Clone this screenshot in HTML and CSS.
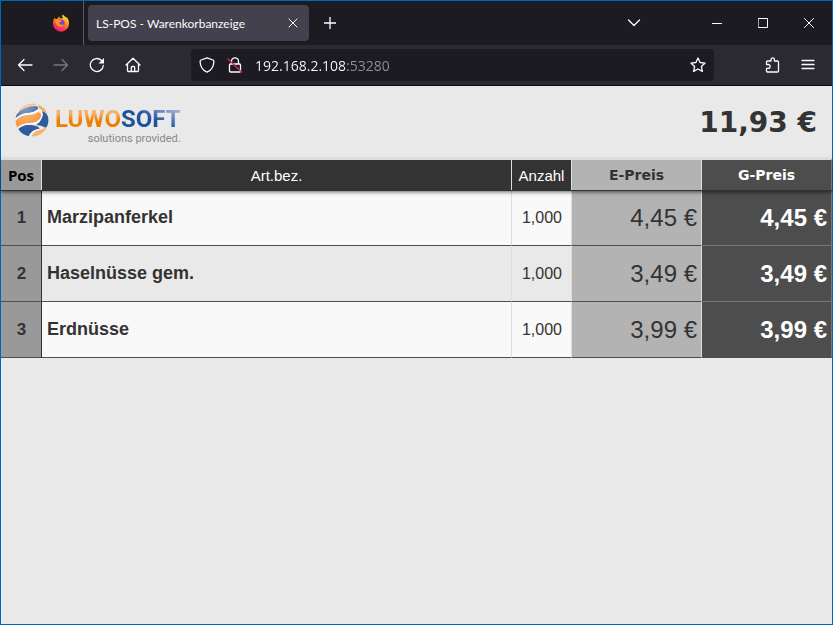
FILE: index.html
```html
<!DOCTYPE html>
<html lang="de">
<head>
    <meta charset="UTF-8">
    <meta name="viewport" content="width=device-width, initial-scale=1.0">
    <title>LS-POS - Warenkorbanzeige</title>
    <link rel="stylesheet" href="styles.css">
</head>
<body>
    <div class="window">
        <div class="tabbar">
            <div class="firefox">
                <svg width="18" height="18" viewBox="0 0 18 18">
                    <defs>
                        <linearGradient id="flame" x1="0.8" y1="0" x2="0.3" y2="1">
                            <stop offset="0" stop-color="#fff44f"/>
                            <stop offset="0.4" stop-color="#ff980e"/>
                            <stop offset="0.75" stop-color="#ff3750"/>
                            <stop offset="1" stop-color="#e31587"/>
                        </linearGradient>
                    </defs>
                    <path fill="url(#flame)" d="M3 3.5l.3 1.4 1.8.1C6 3.6 7 3 8.2 2.600 7.600 3.500 7.500 4 7.600 4.600L11 4C10 2.600 10 1.400 10.800.2c.6 1.300 2.200 2 3.400 3.600l.3-.8c1.800 2 2.700 4.100 2.500 6.700a8 8 0 0 1-16 0C.8 7.300 1.400 5 3 3.500z"/>
                    <circle cx="9" cy="9" r="3.600" fill="#7542e5"/>
                    <path fill="#ff980e" d="M3.500 6c1.600-.8 3.300-.4 4.600.4l2 .3c-.4 1-1.500 1.300-2.600 1.600-.6 1.300.3 2.400 1.600 2.500 1.200.1 1.800-.6 2.900-.3-1 2-3 2.700-5 2C4.600 11.600 3.200 9 3.500 6z"/>
                </svg>
            </div>
            <div class="tab">
                <span class="tab-title">LS-POS - Warenkorbanzeige</span>
                <button class="tab-close" aria-label="Tab schließen">
                    <svg width="10" height="10" viewBox="0 0 10 10"><path d="M1 1l8 8M9 1l-8 8"/></svg>
                </button>
            </div>
            <button class="new-tab" aria-label="Neuer Tab">
                <svg width="12" height="12" viewBox="0 0 12 12"><path d="M6 0v12M0 6h12"/></svg>
            </button>
            <button class="all-tabs" aria-label="Alle Tabs auflisten">
                <svg width="14" height="8" viewBox="0 0 14 8"><path d="M1.500 1L7 6.500 12.500 1"/></svg>
            </button>
            <div class="controls">
                <button aria-label="Minimieren">
                    <svg width="11" height="11" viewBox="0 0 11 11"><path d="M0 5.500h10" shape-rendering="crispEdges"/></svg>
                </button>
                <button aria-label="Maximieren">
                    <svg width="11" height="11" viewBox="0 0 11 11"><path d="M.5.500h9v9h-9z"/></svg>
                </button>
                <button aria-label="Schließen">
                    <svg width="11" height="11" viewBox="0 0 11 11"><path d="M.5.500l9 9M9.500.500l-9 9"/></svg>
                </button>
            </div>
        </div>

        <div class="toolbar">
            <button aria-label="Zurück">
                <svg width="16" height="16" viewBox="0 0 16 16"><path d="M15 8H1.500M7 2.500L1.500 8 7 13.500"/></svg>
            </button>
            <button class="forward" aria-label="Vor" disabled>
                <svg width="16" height="16" viewBox="0 0 16 16"><path d="M1 8h13.500M9 2.500L14.500 8 9 13.500"/></svg>
            </button>
            <button aria-label="Neu laden">
                <svg width="16" height="16" viewBox="0 0 16 16"><path d="M14.300 8.500A6.500 6.500 0 1 1 12.300 3.300l1.200 1.200"/><path class="fill" d="M15 1v5.500H9.500z"/></svg>
            </button>
            <button aria-label="Startseite">
                <svg width="16" height="16" viewBox="0 0 16 16"><path d="M1 8l7-6.800L15 8M2.500 7v6.500q0 1 1 1h9q1 0 1-1V7M6.300 14.500v-4q0-1 1-1h1.400q1 0 1 1v4"/></svg>
            </button>
            <div class="urlbar">
                <svg width="16" height="16" viewBox="0 0 16 16"><path d="M8 .8l6 2.200c.7.300.9.700.9 1.300-.1 5-2.300 9-6.900 10.900C3.400 13.300 1.200 9.300 1.100 4.300c0-.6.200-1 .9-1.300z"/></svg>
                <svg width="16" height="16" viewBox="0 0 16 16"><path d="M4.500 7V4.300a3.500 3.500 0 0 1 7 0V7M3.500 7h9q1 0 1 1v6q0 1-1 1h-9q-1 0-1-1V8q0-1 1-1z"/><path class="strike" d="M1 2l13.500 13"/></svg>
                <input class="address" type="text" aria-label="Adresse" value="192.168.2.108:53280">
                <button class="star" aria-label="Lesezeichen setzen">
                    <svg width="16" height="16" viewBox="0 0 16 16"><path d="M8 1l2.100 4.500 5 .6-3.700 3.400 1 4.900L8 12l-4.400 2.400 1-4.900L.9 6.100l5-.6z"/></svg>
                </button>
            </div>
            <button aria-label="Erweiterungen">
                <svg width="16" height="16" viewBox="0 0 16 16"><path d="M2.500 7V5q0-1 1-1H7V2.600a1.700 1.700 0 0 1 3.400 0V4h3.100q1 0 1 1v9q0 1-1 1h-10q-1 0-1-1v-2.700h1.700a1.900 1.900 0 0 0 0-3.800H2.500z"/></svg>
            </button>
            <button aria-label="Menü">
                <svg width="16" height="16" viewBox="0 0 16 16"><path d="M2 3.500h12M2 7.500h12M2 11.500h12"/></svg>
            </button>
        </div>

        <main class="page">
            <header class="header">
                <div class="logo">
                    <svg class="globe" width="34" height="34" viewBox="0 0 34 34">
                        <defs>
                            <clipPath id="ball"><circle cx="17" cy="17" r="16.500"/></clipPath>
                            <radialGradient id="shine" cx="0.3" cy="0.15" r="0.6">
                                <stop offset="0" stop-color="#fff" stop-opacity="0.4"/>
                                <stop offset="1" stop-color="#fff" stop-opacity="0"/>
                            </radialGradient>
                        </defs>
                        <g clip-path="url(#ball)">
                            <circle cx="17" cy="17" r="17" fill="#ececec"/>
                            <path fill="#f9a95c" d="M4 7Q10 0 19 0l3 2Q12 2 4 9z"/>
                            <path fill="#2f5b9d" d="M1 12Q8 3 21 3q4 1 1 4-4 3-11 3-6 1-11 6z"/>
                            <path fill="#f9a04c" d="M23 0q8 2 10 13-2-4-6-6-4-1-4-7z"/>
                            <path fill="#f7943a" d="M0 18q5-6 13-6 7 0 10-3 4 1 3 5-3 6-12 6-8 0-13 6z"/>
                            <path fill="#2f5b9d" d="M27 8q6 2 7 9 0 5-3 8-5-3-10-3 7-4 6-14z"/>
                            <path fill="#2f5b9d" d="M2 27q6-6 15-5 7 1 8 4-8 1-11 7l-5 1z"/>
                            <path fill="#f9b268" d="M16 34q3-6 9-7 5-1 8-5l-3 11z"/>
                            <path fill="none" stroke="#fff" stroke-width="1.200" d="M0 17q5-6 13-6 7-1 10-4M26 8q3 4-1 9-4 4-11 4-8 0-13 6M25 26q-8 1-11 8"/>
                            <circle cx="17" cy="17" r="17" fill="url(#shine)"/>
                        </g>
                    </svg>
                    <div class="brand">
                        <div class="name"><span class="luwo">LUWO</span><span class="soft">SOFT</span></div>
                        <div class="claim">solutions provided.</div>
                    </div>
                </div>
                <div class="total">11,93 €</div>
            </header>

            <table class="cart">
                <colgroup>
                    <col class="col-pos">
                    <col>
                    <col class="col-count">
                    <col class="col-price">
                    <col class="col-price">
                </colgroup>
                <thead>
                    <tr>
                        <th class="pos">Pos</th>
                        <th class="name-col">Art.bez.</th>
                        <th class="count">Anzahl</th>
                        <th class="single">E-Preis</th>
                        <th class="sum">G-Preis</th>
                    </tr>
                </thead>
                <tbody>
                    <tr>
                        <td class="pos">1</td>
                        <td class="name-col">Marzipanferkel</td>
                        <td class="count">1,000</td>
                        <td class="single">4,45 €</td>
                        <td class="sum">4,45 €</td>
                    </tr>
                    <tr>
                        <td class="pos">2</td>
                        <td class="name-col">Haselnüsse gem.</td>
                        <td class="count">1,000</td>
                        <td class="single">3,49 €</td>
                        <td class="sum">3,49 €</td>
                    </tr>
                    <tr>
                        <td class="pos">3</td>
                        <td class="name-col">Erdnüsse</td>
                        <td class="count">1,000</td>
                        <td class="single">3,99 €</td>
                        <td class="sum">3,99 €</td>
                    </tr>
                </tbody>
            </table>
        </main>
    </div>
</body>
</html>
```
FILE: styles.css
```css
* {
    box-sizing: border-box;
}
body {
    margin: 0;
    font-family: "Liberation Sans", Arial, sans-serif;
    color: #333;
}
.window {
    display: flex;
    flex-direction: column;
    min-height: 100vh;
    border: 1px solid #0067b8;
    background-color: #e9e9e9;
}
button {
    display: flex;
    align-items: center;
    justify-content: center;
    padding: 0;
    border: none;
    background: none;
    color: #fbfbfe;
}
.tabbar svg,
.toolbar svg {
    flex: none;
    fill: none;
    stroke: currentColor;
    stroke-width: 1.3;
    stroke-linejoin: round;
    stroke-linecap: round;
}

/* Tabs */
.tabbar {
    display: flex;
    align-items: center;
    height: 44px;
    background-color: #1c1b22;
    color: #fbfbfe;
}
.firefox {
    display: flex;
    align-items: center;
    justify-content: flex-end;
    width: 83px;
    height: 44px;
    padding-right: 13px;
    border-right: 1px solid #5b5b66;
}
.tabbar .firefox svg {
    stroke: none;
}
.tab {
    display: flex;
    align-items: center;
    justify-content: space-between;
    width: 221px;
    height: 36px;
    margin-left: 4px;
    padding: 0 11px 0 8px;
    border-radius: 4px;
    background-color: #42414d;
    font-family: Lato, "Open Sans", sans-serif;
    font-size: 12px;
    white-space: nowrap;
}
.tab-close svg {
    stroke-width: 1;
}
.new-tab {
    width: 42px;
    height: 36px;
}
.all-tabs {
    width: 36px;
    height: 36px;
    margin-left: auto;
    margin-right: 42px;
}
.controls {
    display: flex;
}
.controls button {
    width: 46px;
    height: 44px;
}
.controls svg {
    stroke-width: 1;
    stroke-linejoin: miter;
}

/* Navigation */
.toolbar {
    display: flex;
    align-items: center;
    height: 41px;
    padding: 0 6px;
    border-bottom: 1px solid #0c0c0d;
    background-color: #2b2a33;
}
.toolbar > button {
    width: 36px;
    height: 32px;
}
.toolbar .forward {
    color: #77767f;
}
.toolbar .fill {
    fill: currentColor;
    stroke: none;
}
.toolbar .strike {
    stroke: #e22850;
}
.urlbar {
    display: flex;
    flex: 1;
    align-items: center;
    gap: 12px;
    height: 32px;
    margin: 0 40px;
    padding: 0 8px;
    border-radius: 4px;
    background-color: #1c1b22;
    color: #fbfbfe;
}
.address {
    flex: 1;
    min-width: 0;
    height: 24px;
    padding: 0;
    border: none;
    outline: none;
    /* host in white, port in grey */
    background: linear-gradient(to right, #fbfbfe 90px, #8f8f9d 90px);
    -webkit-background-clip: text;
    background-clip: text;
    color: transparent;
    font-family: "Open Sans", "Noto Sans", sans-serif;
    font-size: 14px;
}

/* Page */
.page {
    flex: 1;
}
.header {
    display: flex;
    align-items: center;
    justify-content: space-between;
    height: 73px;
    padding: 0 15px 0 14px;
}
.logo {
    display: flex;
    align-items: flex-start;
    gap: 6px;
}
.name {
    font-family: Roboto, sans-serif;
    font-size: 24px;
    font-weight: 700;
    line-height: 32px;
}
.luwo,
.soft {
    -webkit-background-clip: text;
    background-clip: text;
    color: transparent;
}
.luwo {
    background-image: linear-gradient(to bottom, #f9b060 30%, #ee7f00 55%);
}
.soft {
    background-image: linear-gradient(to top right, #1d529c 50%, #a9b8dc 90%);
}
.claim {
    color: #888;
    font-family: Roboto, sans-serif;
    font-size: 11px;
    line-height: 8px;
    text-align: right;
}
.total {
    font-family: "Arial Black", "DejaVu Sans", sans-serif;
    font-size: 28px;
    font-weight: 900;
}

/* Cart */
.cart {
    width: 100%;
    table-layout: fixed;
    border-collapse: separate;
    border-spacing: 0;
}
.col-pos {
    width: 41px;
}
.col-count {
    width: 60px;
}
.col-price {
    width: 130px;
}
.cart thead {
    position: relative;
    box-shadow: 0 1px 0 #333, 0 2px 4px rgba(0, 0, 0, 0.6);
}
.cart th {
    height: 31px;
    padding: 0;
    border-top: 1px solid #ddd;
    border-right: 1px solid #ddd;
    background-color: #333;
    color: #fff;
    font-size: 15px;
    font-weight: normal;
}
.cart td {
    height: 56px;
    padding: 0 4px 0 5px;
    border-right: 1px solid #ddd;
    border-bottom: 1px solid #4d4d4d;
}
.cart tbody tr:nth-child(odd) {
    background-color: #f9f9f9;
}
.cart .pos {
    background-color: #999;
    font-weight: bold;
    text-align: center;
}
.cart th.pos {
    color: #000;
    font-family: "Open Sans", sans-serif;
}
.cart td.pos {
    border-right-color: #333;
    font-size: 17px;
}
.cart td.name-col {
    font-size: 18px;
    font-weight: bold;
}
.cart td.count {
    font-size: 16px;
    text-align: center;
}
.cart .single {
    background-color: #b3b3b3;
    color: #333;
}
.cart .sum {
    border-right-color: #777;
    background-color: #4d4d4d;
    color: #fff;
}
.cart th.single,
.cart th.sum {
    font-family: "Arial Black", "DejaVu Sans", sans-serif;
    font-size: 14px;
    font-weight: 900;
}
.cart td.single,
.cart td.sum {
    font-size: 24px;
    text-align: right;
}
.cart td.sum {
    border-bottom-color: #777;
    font-weight: bold;
}
.cart tr:last-child td.sum {
    border-bottom-color: #4d4d4d;
}
```
